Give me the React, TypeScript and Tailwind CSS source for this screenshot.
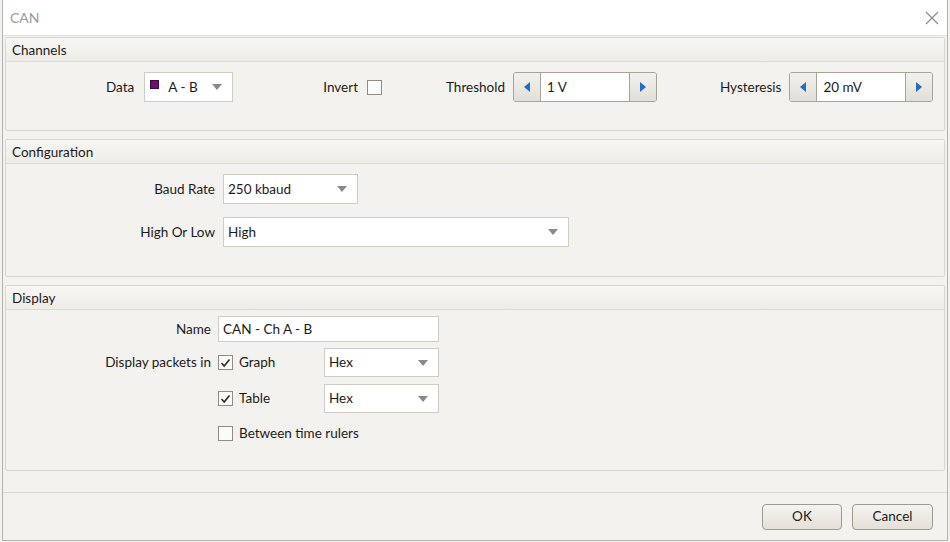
import React from "react";

const font = { fontFamily: "Lato, 'Open Sans', sans-serif" };

function Caret() {
  return (
    <svg width="10" height="6" viewBox="0 0 10 6" className="shrink-0">
      <path d="M0 0 L10 0 L5 6 Z" fill="#8a8a8a" />
    </svg>
  );
}

function Combo({ w, h = 30, children }: { w: string; h?: number; children: React.ReactNode }) {
  return (
    <div
      className={`${w} flex items-center justify-between bg-white border border-[#cfccc6] pl-[4px] pr-[10px]`}
      style={{ height: h }}
    >
      <div className="flex items-center text-[13.5px] text-[#1a1a1a]">{children}</div>
      <Caret />
    </div>
  );
}

function Arrow({ dir }: { dir: "l" | "r" }) {
  return (
    <svg width="6" height="10" viewBox="0 0 6 10">
      {dir === "l" ? <path d="M6 0 L0 5 L6 10 Z" fill="#1e6fc2" /> : <path d="M0 0 L6 5 L0 10 Z" fill="#1e6fc2" />}
    </svg>
  );
}

function Spinner({ value }: { value: string }) {
  return (
    <div className="flex h-[30px] w-[144px] rounded-[3px] border border-[#a7a39b] overflow-hidden">
      <div className="w-[27px] flex items-center justify-center bg-gradient-to-b from-[#f3f1ec] to-[#e2dfd8] border-r border-[#a7a39b]">
        <Arrow dir="l" />
      </div>
      <div className="flex-1 bg-white flex items-center pl-[6px] text-[13.5px] text-[#1a1a1a]">{value}</div>
      <div className="w-[27px] flex items-center justify-center bg-gradient-to-b from-[#f3f1ec] to-[#e2dfd8] border-l border-[#a7a39b]">
        <Arrow dir="r" />
      </div>
    </div>
  );
}

function Check({ checked }: { checked?: boolean }) {
  return (
    <div className="w-[15px] h-[15px] border border-[#8f8c86] bg-[#fbfbfa] flex items-center justify-center shrink-0">
      {checked && (
        <svg width="11" height="10" viewBox="0 0 11 10">
          <path d="M1.5 5 L4.2 8 L9.5 1.5" stroke="#2a2a2a" strokeWidth="1.6" fill="none" />
        </svg>
      )}
    </div>
  );
}

function Group({ title, children, body }: { title: string; children: React.ReactNode; body: string }) {
  return (
    <div className="ml-[2px] mr-[2px] border border-[#d9d6d0] rounded-[2px] bg-[#f4f2ee]">
      <div className="h-[24px] flex items-center pl-[6px] pt-[1px] bg-gradient-to-b from-[#f8f7f4] to-[#efece6] border-b border-[#dedbd5] text-[13.5px] text-[#1a1a1a]">
        {title}
      </div>
      <div className={body}>{children}</div>
    </div>
  );
}

export default function App() {
  return (
    <div className="w-[950px] h-[542px] bg-[#f4f2ee] overflow-hidden" style={font}>
      <div className="ml-[2px] mr-[2px] h-[541px] border-l border-r border-b border-[#b4b2ae] bg-[#f4f2ee] flex flex-col">
        <div className="h-[36px] bg-white flex items-center justify-between pl-[7px] pr-[8px] border-b border-[#e3e1dc]">
          <span className="text-[14px] text-[#9b9b9b]">CAN</span>
          <svg width="14" height="14" viewBox="0 0 14 14">
            <path d="M1 1 L13 13 M13 1 L1 13" stroke="#8a8a8a" strokeWidth="1.2" />
          </svg>
        </div>
        <div className="pt-[1px] flex flex-col gap-[8px]">
          <Group title="Channels" body="h-[68px] pt-[10px]">
            <div className="flex items-center text-[13.5px] text-[#1a1a1a]">
              <span className="ml-[100px]">Data</span>
              <div className="ml-[10px]">
                <Combo w="w-[89px]">
                  <span className="w-[9px] h-[9px] bg-[#6b0f70] border border-[#3e0740] ml-[1px] mr-[9px] -mt-[6px]" />
                  <span>A - B</span>
                </Combo>
              </div>
              <span className="ml-[90px]">Invert</span>
              <div className="ml-[9px]"><Check /></div>
              <span className="ml-[64px]">Threshold</span>
              <div className="ml-[8px]"><Spinner value="1 V" /></div>
              <span className="ml-[63px]">Hysteresis</span>
              <div className="ml-[8px]"><Spinner value="20 mV" /></div>
            </div>
          </Group>
          <Group title="Configuration" body="h-[112px] pt-[10px]">
            <div className="flex flex-col gap-[13px] text-[13.5px] text-[#1a1a1a]">
              <div className="flex items-center">
                <span className="w-[217px] text-right pr-[8px]">Baud Rate</span>
                <Combo w="w-[135px]">250 kbaud</Combo>
              </div>
              <div className="flex items-center">
                <span className="w-[217px] text-right pr-[8px]">High Or Low</span>
                <Combo w="w-[346px]">High</Combo>
              </div>
            </div>
          </Group>
          <Group title="Display" body="h-[160px] pt-[6px]">
            <div className="flex flex-col text-[13.5px] text-[#1a1a1a]">
              <div className="flex items-center">
                <span className="w-[212px] text-right pr-[7px]">Name</span>
                <div className="w-[221px] h-[26px] bg-white border border-[#cfccc6] flex items-center pl-[4px]">CAN - Ch A - B</div>
              </div>
              <div className="flex items-center mt-[6px]">
                <span className="w-[212px] text-right pr-[7px]">Display packets in</span>
                <Check checked />
                <span className="ml-[6px] w-[85px]">Graph</span>
                <Combo w="w-[115px]" h={29}>Hex</Combo>
              </div>
              <div className="flex items-center mt-[7px]">
                <span className="w-[212px]" />
                <Check checked />
                <span className="ml-[6px] w-[85px]">Table</span>
                <Combo w="w-[115px]" h={29}>Hex</Combo>
              </div>
              <div className="flex items-center mt-[10px]">
                <span className="w-[212px]" />
                <Check />
                <span className="ml-[6px]">Between time rulers</span>
              </div>
            </div>
          </Group>
        </div>
        <div className="h-[22px] border-b border-[#dcd9d3]" />
        <div className="flex-1 flex items-center justify-end gap-[10px] pr-[14px]">
          <button className="w-[80px] h-[26px] rounded-[4px] border border-[#9e9a92] bg-gradient-to-b from-[#f6f4f0] to-[#e4e0d8] text-[13.5px] text-[#1a1a1a]">OK</button>
          <button className="w-[81px] h-[26px] rounded-[4px] border border-[#9e9a92] bg-gradient-to-b from-[#f6f4f0] to-[#e4e0d8] text-[13.5px] text-[#1a1a1a]">Cancel</button>
        </div>
      </div>
    </div>
  );
}
